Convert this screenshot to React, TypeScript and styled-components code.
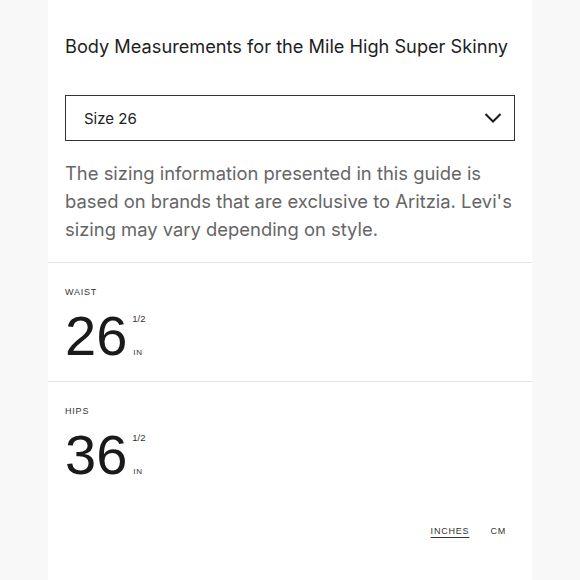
import styled, { createGlobalStyle } from "styled-components";

const GlobalStyle = createGlobalStyle`
  html, body {
    margin: 0;
    padding: 0;
    background: #f8f8f8;
  }
  * { box-sizing: border-box; }
`;

const Panel = styled.div`
  width: 484px;
  min-height: 580px;
  margin-left: 48px;
  background: #ffffff;
  font-family: "Inter", sans-serif;
  color: #222;
`;

const Top = styled.div`
  padding: 34px 17px 19px 17px;
`;

const Title = styled.h1`
  margin: 0;
  font-size: 18.2px;
  font-weight: 400;
  line-height: 24px;
  color: #1e1e1e;
`;

const SelectBox = styled.div`
  margin-top: 37px;
  width: 450px;
  height: 46px;
  border: 1.5px solid #333;
  display: flex;
  align-items: center;
  justify-content: space-between;
  padding: 0 12px 0 18px;
  font-size: 15px;
  color: #222;
`;

const Note = styled.p`
  margin: 18px 0 0 0;
  font-size: 18.4px;
  line-height: 28px;
  color: #666;
`;

const Section = styled.div`
  border-top: 1px solid #e6e6e6;
  padding: 24px 17px 20px 17px;
`;

const Label = styled.div`
  font-family: "Liberation Sans", Arial, sans-serif;
  font-size: 9px;
  letter-spacing: 0.8px;
  color: #333;
`;

const Measure = styled.div`
  display: flex;
  align-items: stretch;
  margin-top: 14px;
  height: 50px;
`;

const BigNum = styled.span`
  font-family: "Liberation Sans", Arial, sans-serif;
  font-size: 56px;
  line-height: 50px;
  color: #1a1a1a;
`;

const Side = styled.div`
  display: flex;
  flex-direction: column;
  justify-content: space-between;
  margin-left: 5px;
  padding: 3px 0 3px 0;
  font-family: "Liberation Sans", Arial, sans-serif;
  color: #333;
`;

const Frac = styled.span`
  font-size: 9.5px;
  line-height: 10px;
`;

const Unit = styled.span`
  font-size: 8px;
  letter-spacing: 0.8px;
  line-height: 10px;
  margin-left: 1px;
`;

const Units = styled.div`
  display: flex;
  justify-content: flex-end;
  gap: 21px;
  padding: 26px 26px 0 0;
`;

const UnitLink = styled.span<{ $active?: boolean }>`
  font-family: "Liberation Sans", Arial, sans-serif;
  font-size: 9px;
  letter-spacing: 0.8px;
  color: #333;
  text-decoration: ${(p) => (p.$active ? "underline" : "none")};
  text-underline-offset: 3px;
`;

const Chevron = () => (
  <svg width="18" height="12" viewBox="0 0 18 12" fill="none">
    <path d="M1.5 2 L9 9.5 L16.5 2" stroke="#1a1a1a" strokeWidth="2" />
  </svg>
);

const rows = [
  { label: "WAIST", value: "26" },
  { label: "HIPS", value: "36" },
];

export default function App() {
  return (
    <>
      <GlobalStyle />
      <Panel>
        <Top>
          <Title>Body Measurements for the Mile High Super Skinny</Title>
          <SelectBox>
            <span>Size 26</span>
            <Chevron />
          </SelectBox>
          <Note>
            The sizing information presented in this guide is based on brands
            that are exclusive to Aritzia. Levi's sizing may vary depending on
            style.
          </Note>
        </Top>
        {rows.map((r) => (
          <Section key={r.label}>
            <Label>{r.label}</Label>
            <Measure>
              <BigNum>{r.value}</BigNum>
              <Side>
                <Frac>1/2</Frac>
                <Unit>IN</Unit>
              </Side>
            </Measure>
          </Section>
        ))}
        <Units>
          <UnitLink $active>INCHES</UnitLink>
          <UnitLink>CM</UnitLink>
        </Units>
      </Panel>
    </>
  );
}
